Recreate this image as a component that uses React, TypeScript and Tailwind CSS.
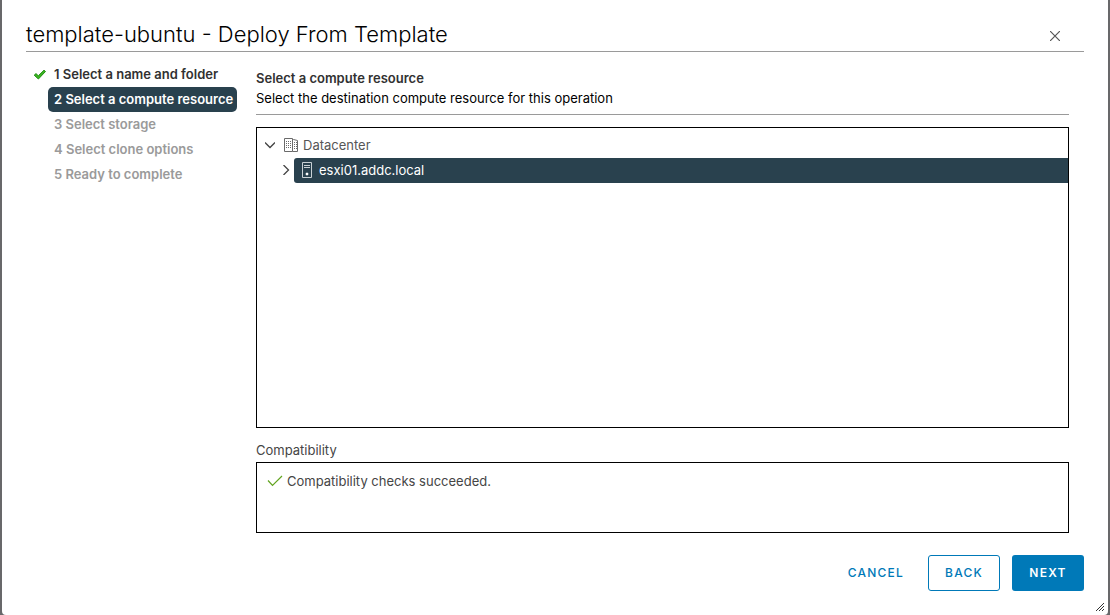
import { useState } from "react";

const steps = [
  { label: "1 Select a name and folder", state: "done" },
  { label: "2 Select a compute resource", state: "current" },
  { label: "3 Select storage", state: "pending" },
  { label: "4 Select clone options", state: "pending" },
  { label: "5 Ready to complete", state: "pending" },
];

const stepStyles: Record<string, string> = {
  done: "text-[#313131]",
  current: "bg-[#29414e] text-white",
  pending: "text-[#9a9a9a]",
};

function DoneIcon() {
  return (
    <svg width="14" height="12" viewBox="0 0 14 12" className="shrink-0" aria-hidden="true">
      <path d="M1.2 6.2 3 4.6l2.3 2.2L11 1.2l1.5 1.3L5.4 10z" fill="#3cb521" stroke="#208f12" strokeWidth="1" strokeLinejoin="round" />
    </svg>
  );
}

function DatacenterIcon() {
  return (
    <svg width="16" height="16" viewBox="0 0 16 16" fill="none" stroke="#6a6a6a" className="shrink-0" aria-hidden="true">
      <path d="M1.5 14.5v-13h8v13zM9.5 2.5h1l4 1v11h-5" />
      <path d="M3 4.5h6M3 6.5h6M3 8.5h6M3 10.5h6" strokeDasharray="1 1" />
      <path d="M11 5.5h3M11 7.5h3M11 9.5h3M11 11.5h3" strokeDasharray="1 1" />
    </svg>
  );
}

function HostIcon() {
  return (
    <svg width="12" height="16" viewBox="0 0 12 16" fill="none" stroke="#c9d1d5" className="shrink-0" aria-hidden="true">
      <path d="M1.5.5h9v15h-9zM3 3.5h6M3 5.5h6" />
      <path d="M5 11h2v2H5z" fill="#fff" stroke="#fff" strokeWidth="0.5" />
    </svg>
  );
}

export default function App() {
  const [open, setOpen] = useState(true);
  return (
    <div className="flex min-h-screen bg-[#68686a] px-0.5 font-['Inter','Liberation_Sans',sans-serif] text-[13px] leading-5">
      <section
        role="dialog"
        aria-labelledby="title"
        className="relative flex w-full flex-col rounded-b bg-white px-6 pt-5 pb-6"
      >
        <header className="flex items-center justify-between border-b border-[#9a9a9a] pr-6">
          <h1 id="title" className="pb-0.5 text-[22px] leading-[29px] font-light text-black">
            template-ubuntu - Deploy From Template
          </h1>
          <button type="button" aria-label="Close" className="p-0 text-[#565656]">
            <svg width="10" height="10" viewBox="0 0 10 10" fill="none" stroke="currentColor" strokeWidth="1.2" aria-hidden="true">
              <path d="M0 0l10 10M10 0L0 10" />
            </svg>
          </button>
        </header>

        <div className="flex grow pt-2.5">
          <nav aria-label="Wizard steps" className="w-[230px] shrink-0">
            <ol>
              {steps.map((step) => (
                <li key={step.label} className="flex h-[25px] items-center">
                  <span className="flex w-[22px] shrink-0 pl-[7px]">{step.state === "done" && <DoneIcon />}</span>
                  <button
                    type="button"
                    disabled={step.state === "pending"}
                    aria-current={step.state === "current" ? "step" : undefined}
                    className={`h-full w-[189px] rounded-[5px] pb-0.5 pl-1.5 text-left font-semibold whitespace-nowrap ${stepStyles[step.state]}`}
                  >
                    {step.label}
                  </button>
                </li>
              ))}
            </ol>
          </nav>

          <main className="flex min-w-0 grow flex-col pr-[15px]">
            <h2 className="pt-1.5 leading-5 font-semibold text-[#313131]">Select a compute resource</h2>
            <p className="border-b border-[#9a9a9a] pb-1.5 text-black">
              Select the destination compute resource for this operation
            </p>

            <div role="tree" aria-label="Compute resources" className="mt-3 min-h-[301px] grow border border-black pt-[5px]">
              <div role="treeitem" aria-expanded={open} className="flex h-[25px] items-center pb-0.5 text-[#565656]">
                <button type="button" aria-label="Toggle Datacenter" onClick={() => setOpen(!open)} className="flex w-[26px] shrink-0 pl-2">
                  <svg width="10" height="10" viewBox="0 0 10 10" fill="none" stroke="#454545" strokeWidth="1.3" aria-hidden="true">
                    <path d={open ? "M0 2.5l5 5 5-5" : "M2.5 0l5 5-5 5"} />
                  </svg>
                </button>
                <DatacenterIcon />
                <span className="pl-1">Datacenter</span>
              </div>
              {open && (
                <div role="treeitem" aria-selected="true" className="flex h-[25px] items-center">
                  <button type="button" aria-label="Expand esxi01.addc.local" className="flex w-[37px] shrink-0 pb-0.5 pl-6">
                    <svg width="10" height="10" viewBox="0 0 10 10" fill="none" stroke="#454545" strokeWidth="1.3" aria-hidden="true">
                      <path d="M2.5 0l5 5-5 5" />
                    </svg>
                  </button>
                  <div className="flex h-full grow items-center rounded-l-[3px] bg-[#29414e] pb-0.5 pl-[7px] text-white">
                    <HostIcon />
                    <span className="pl-1.5">esxi01.addc.local</span>
                  </div>
                </div>
              )}
            </div>

            <h3 className="pt-3 pb-0.5 text-[#454545]">Compatibility</h3>
            <div className="min-h-[71px] border border-black px-2.5 pt-2">
              <p className="flex items-center text-[#454545]">
                <svg width="16" height="12" viewBox="0 0 16 12" fill="none" stroke="#62a420" strokeWidth="1.2" className="mr-1 shrink-0" aria-hidden="true">
                  <path d="M1 5.5l4.5 5L15 1" />
                </svg>
                Compatibility checks succeeded.
              </p>
            </div>
          </main>
        </div>

        <footer className="flex justify-end gap-3 pt-[22px] text-xs font-medium">
          <button type="button" className="h-9 px-3 tracking-widest text-[#0079b8]">CANCEL</button>
          <button type="button" className="h-9 w-[72px] rounded-[3px] border border-[#0079b8] tracking-widest text-[#0079b8]">
            BACK
          </button>
          <button type="button" className="h-9 w-[72px] rounded-[3px] bg-[#0079b8] font-semibold tracking-widest text-white">
            NEXT
          </button>
        </footer>

        <svg width="8" height="8" viewBox="0 0 8 8" stroke="#333" className="absolute right-1 bottom-1" aria-hidden="true">
          <path d="M0 8L8 0M3 8l5-5M6 8l2-2" />
        </svg>
      </section>
    </div>
  );
}
